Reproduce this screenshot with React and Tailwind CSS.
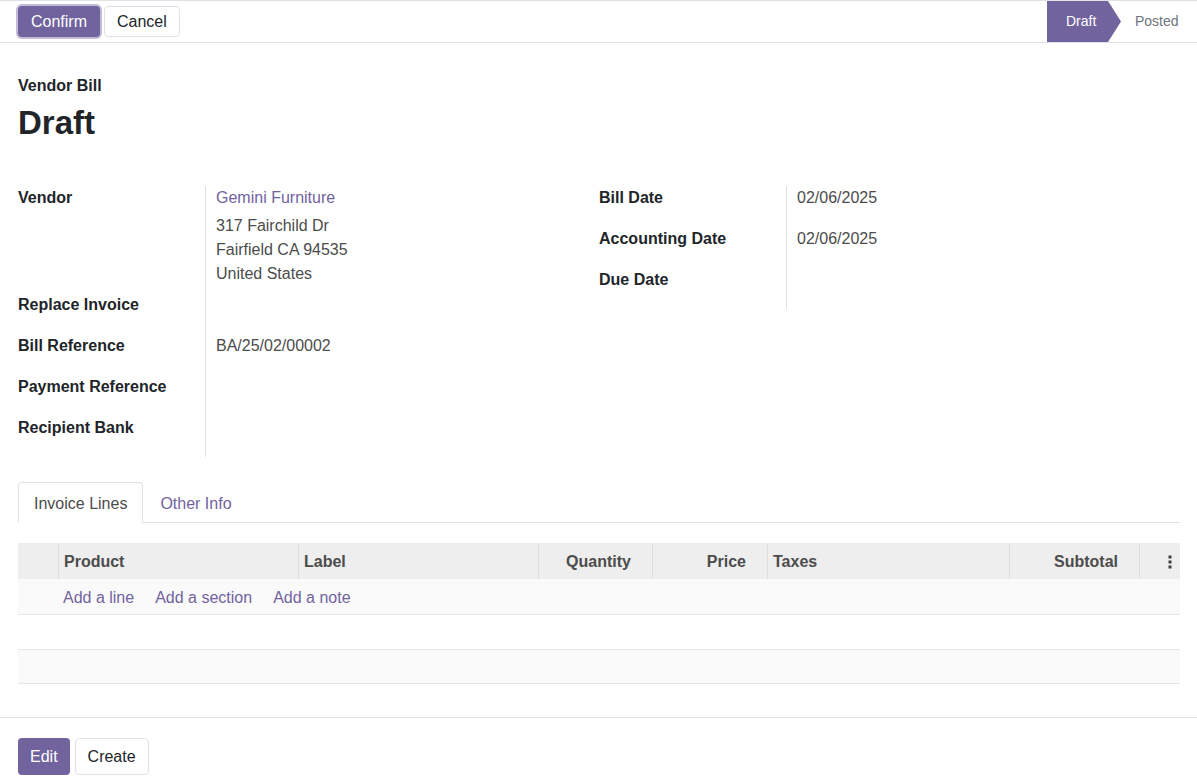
import React from "react";

const purple = "bg-[#71639e]";

const leftFields = [
  { label: "Vendor", vendor: true },
  { label: "Replace Invoice", value: "" },
  { label: "Bill Reference", value: "BA/25/02/00002" },
  { label: "Payment Reference", value: "" },
  { label: "Recipient Bank", value: "" },
];

const rightFields = [
  { label: "Bill Date", value: "02/06/2025" },
  { label: "Accounting Date", value: "02/06/2025" },
  { label: "Due Date", value: "" },
];

const columns = [
  { name: "", align: "left" },
  { name: "Product", align: "left" },
  { name: "Label", align: "left" },
  { name: "Quantity", align: "right" },
  { name: "Price", align: "right" },
  { name: "Taxes", align: "left" },
  { name: "Subtotal", align: "right" },
  { name: "opt", align: "end" },
];

const gridCols =
  "grid grid-cols-[41px_240px_240px_114px_115px_242px_130px_39px]";

function FieldGroup({ fields }) {
  return (
    <div className="grid grid-cols-[187px_1fr]">
      {fields.map((f) => (
        <React.Fragment key={f.label}>
          <div className="font-bold text-[#212529] leading-6">{f.label}</div>
          <div className="border-l border-[#dee2e6] pl-[10px] text-[#4c4c4c] leading-6">
            {f.vendor ? (
              <div className="pb-[7px]">
                <div className="text-[#71639e]">Gemini Furniture</div>
                <div className="mt-1">
                  <div>317 Fairchild Dr</div>
                  <div>Fairfield CA 94535</div>
                  <div>United States</div>
                </div>
              </div>
            ) : (
              <div className="h-[41px]">{f.value}</div>
            )}
          </div>
        </React.Fragment>
      ))}
    </div>
  );
}

export default function App() {
  return (
    <div className="min-h-screen bg-white font-['Liberation_Sans',Arial,sans-serif] text-base text-[#212529]">
      {/* control panel */}
      <div className="flex h-[43px] items-center justify-between border-y border-[#dee2e6]">
        <div className="flex items-center gap-1 pl-[18px]">
          <button className={`h-[31px] rounded px-[13px] text-white ${purple} ring-2 ring-[#c3bcd9]`}>
            Confirm
          </button>
          <button className="h-[31px] rounded border border-[#dee2e6] bg-white px-3 text-[#212529]">
            Cancel
          </button>
        </div>
        <div className="flex h-full items-center self-stretch pr-[17px]">
          <div
            className={`flex h-full w-[74px] items-center pl-[19px] text-[14px] text-white ${purple} [clip-path:polygon(0_0,61px_0,74px_50%,61px_100%,0_100%)]`}
          >
            Draft
          </div>
          <div className="w-[59px] pl-[14px] text-[14px] text-[#6c757d]">Posted</div>
        </div>
      </div>

      {/* sheet */}
      <div className="px-[18px] pr-[17px]">
        <div className="pt-[31px]">
          <div className="font-bold leading-6">Vendor Bill</div>
          <div className="mt-[6px] text-[33px] font-bold leading-[38px]">
            Draft
          </div>
        </div>

        <div className="mt-[44px] grid grid-cols-2">
          <FieldGroup fields={leftFields} />
          <div>
            <FieldGroup fields={rightFields} />
          </div>
        </div>

        {/* tabs */}
        <div className="mt-[25px] flex border-b border-[#dee2e6]">
          <div className="-mb-px flex h-[41px] items-center rounded-t border border-b-white border-[#dee2e6] bg-white px-[15px] pt-[3px] text-[#4c4c4c]">
            Invoice Lines
          </div>
          <div className="flex h-[40px] items-center px-[17px] pt-[3px] text-[#71639e]">
            Other Info
          </div>
        </div>

        {/* lines table */}
        <div className="mt-[20px]">
          <div className={`${gridCols} h-[36px] bg-[#eeeeee] font-bold text-[#4c4c4c]`}>
            {columns.map((c, i) => (
              <div
                key={i}
                className={`flex items-center pt-px ${
                  i < columns.length - 1 ? "border-r border-[#dcdcdc]" : ""
                } ${
                  c.align === "right"
                    ? "justify-end pr-[21px]"
                    : c.align === "end"
                    ? "justify-end pr-[7px]"
                    : "pl-[5px]"
                }`}
              >
                {c.name === "opt" ? (
                  <svg width="4" height="14" viewBox="0 0 4 14">
                    <rect x="0.5" y="0.5" width="3" height="3" fill="#3f3f3f" />
                    <rect x="0.5" y="5.5" width="3" height="3" fill="#3f3f3f" />
                    <rect x="0.5" y="10.5" width="3" height="3" fill="#3f3f3f" />
                  </svg>
                ) : (
                  c.name
                )}
              </div>
            ))}
          </div>
          <div className="flex h-[36px] items-center gap-[21px] border-b border-[#e6e6e6] bg-[#fafafa] pl-[45px] pt-[2px] text-[#71639e]">
            <span>Add a line</span>
            <span>Add a section</span>
            <span>Add a note</span>
          </div>
          <div className="h-[35px] border-b border-[#e6e6e6] bg-white" />
          <div className="h-[34px] border-b border-[#e6e6e6] bg-[#fafafa]" />
        </div>
      </div>

      {/* bottom buttons */}
      <div className="mt-[33px] border-t border-[#dee2e6] pl-[18px] pt-5">
        <div className="flex gap-[5px]">
          <button className={`h-[37px] rounded px-3 text-white ${purple}`}>
            Edit
          </button>
          <button className="h-[37px] rounded border border-[#dee2e6] bg-white px-3 text-[#212529]">
            Create
          </button>
        </div>
      </div>
    </div>
  );
}
